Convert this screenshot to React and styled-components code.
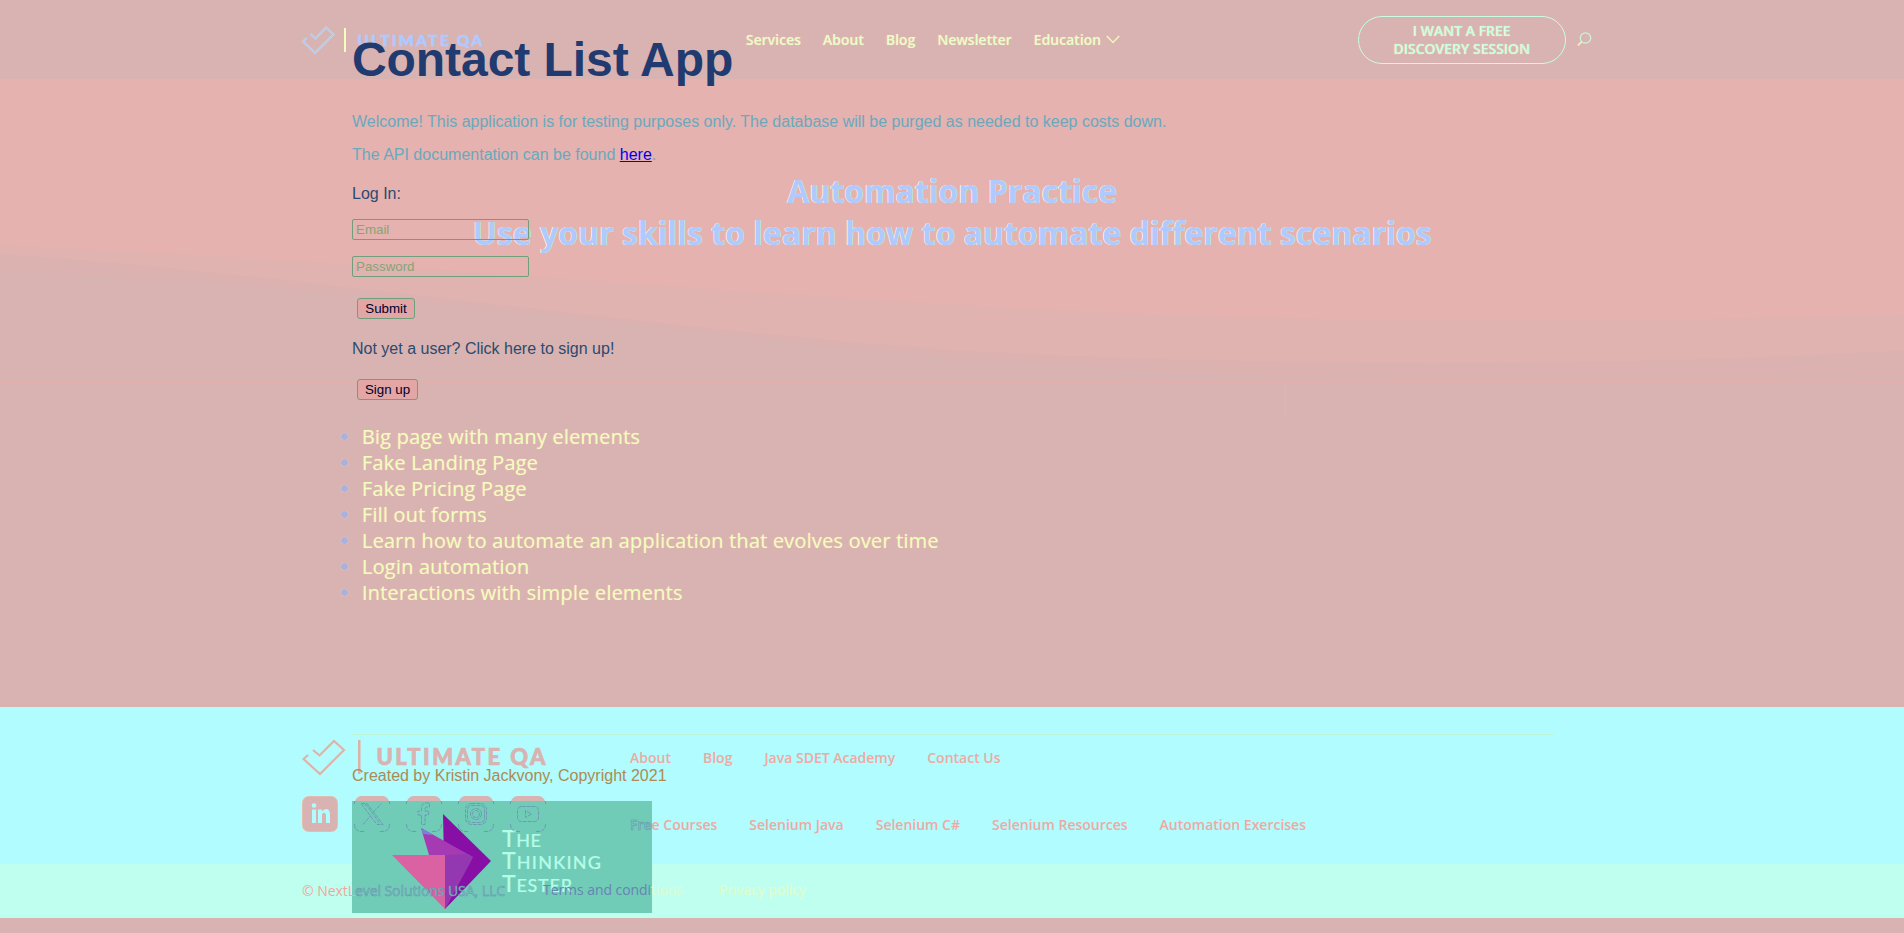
import React from 'react';
import styled, { createGlobalStyle } from 'styled-components';

const sans = '"Open Sans", "Noto Sans", sans-serif';
const arial = '"Liberation Sans", Arial, sans-serif';

const Global = createGlobalStyle`
  * { box-sizing: border-box; }
  html, body { margin: 0; background: #d9b3b1; }
  body { height: 933px; overflow: hidden; font-family: ${sans}; }
  a { text-decoration: none; color: inherit; }
`;

const Stage = styled.div`
  position: relative;
  width: 1904px;
  height: 933px;
  overflow: hidden;
`;
const Page = styled.div`
  display: flex;
  flex-direction: column;
  height: 933px;
`;

/* Header */
const Header = styled.header`
  display: flex;
  align-items: center;
  height: 79px;
  padding-left: 302px;
  background: #d9b3b1;
`;
const Brand = styled.a`
  display: block;
  width: 444px;
  height: 30px;
  svg { display: block; }
`;
const MainNav = styled.nav`
  display: flex;
  gap: 22px;
  width: 612px;
  font-size: 14px;
  font-weight: 600;
  line-height: 20px;
  color: #e6ffc8;
  a { display: flex; align-items: center; gap: 5px; text-shadow: -0.5px 0 1px #ffc4b4; }
`;
const Cta = styled.a`
  display: flex;
  align-items: center;
  justify-content: center;
  width: 208px;
  height: 48px;
  border: 1px solid #c8fde4;
  border-radius: 24px;
  font-size: 14px;
  font-weight: 600;
  line-height: 18px;
  text-align: center;
  color: #c4fde4;
  text-shadow: -0.5px 0 1px #fff0b4;
`;
const Search = styled.svg`
  margin-left: 11px;
`;

/* Hero */
const Hero = styled.section`
  height: 304px;
  background: #e5b2b0;
  position: relative;
`;
const Waves = styled.svg`
  position: absolute;
  inset: 0;
`;
const HeroTitle = styled.h1`
  position: relative;
  margin: 0;
  padding-top: 91px;
  text-align: center;
  font-size: 32px;
  font-weight: 700;
  line-height: 42px;
  color: #b0c9ff;
  text-shadow: -0.6px 0 0 #fbf3b4, 0.5px 0.4px 0 #d4fbe6;
`;

/* Practice list */
const ListSection = styled.section`
  height: 324px;
  padding: 41px 0 0 341px;
`;
const PracticeList = styled.ul`
  list-style: none;
  margin: 0;
  padding: 0;
  font-size: 20px;
  font-weight: 500;
  line-height: 26px;
  letter-spacing: 0.19px;
  color: #eeffbe;
`;
const PracticeItem = styled.li`
  display: flex;
  align-items: center;
  gap: 14px;
  text-shadow: -0.5px 0 1px #ffc4b4;
`;
const Bullet = styled.i`
  width: 7px;
  height: 7px;
  margin-top: -1px;
  border-radius: 50%;
  background: #acb0dc;
  box-shadow: 0 0 1px #c4f4f0;
`;

/* Footer */
const Footer = styled.footer`
  height: 157px;
  padding: 27px 0 0 302px;
  background: #b0fcff;
`;
const Rule = styled.div`
  width: 1202px;
  height: 1px;
  margin-left: 50px;
  background: #bdf3d6;
`;
const FooterRow = styled.div`
  display: flex;
`;
const FooterBrand = styled.div`
  display: flex;
  flex-direction: column;
  width: 328px;
  padding-top: 2px;
`;
const Socials = styled.div`
  position: relative;
  z-index: 2;
  display: flex;
  gap: 16px;
  margin-top: 19px;
  svg { display: block; }
`;
const FooterNavs = styled.div`
  display: flex;
  flex-direction: column;
  gap: 47px;
  padding-top: 13px;
`;
const FooterNav = styled.nav`
  position: relative;
  z-index: 2;
  display: flex;
  gap: 32px;
  font-size: 14px;
  font-weight: 600;
  line-height: 20px;
  color: #efa9a2;
  white-space: nowrap;
`;
const Legal = styled.div`
  display: flex;
  align-items: center;
  height: 54px;
  padding-left: 302px;
  background: #bffff0;
  font-size: 14px;
  line-height: 20px;
  white-space: nowrap;
`;
const Notice = styled.span`
  position: relative;
  z-index: 2;
  width: ${(p) => p.$w}px;
  padding-bottom: ${(p) => p.$lift || 0}px;
  color: ${(p) => p.$tone};
  font-weight: ${(p) => p.$weight || 400};
  letter-spacing: -0.06px;
`;
const Covered = styled.span`
  color: ${(p) => (p.$hollow ? '#70ccb7' : '#6983b2')};
  -webkit-text-stroke: ${(p) => (p.$hollow ? '0.5px #6c8cb3' : '0')};
`;

/* Contact list app, layered over the page */
const ContactApp = styled.main`
  position: absolute;
  top: 0;
  left: 352px;
  width: 1200px;
  font-family: ${arial};
  font-size: 16px;
  line-height: 18px;
`;
const AppTitle = styled.h1`
  margin: 0;
  padding-top: 32px;
  font-size: 48px;
  line-height: 55px;
  font-weight: 700;
  letter-spacing: -0.06px;
  color: #213a70;
`;
const Para = styled.p`
  margin: ${(p) => p.$top}px 0 0;
  color: ${(p) => p.$tone};
`;
const DocLink = styled.a`
  && { color: #0000ee; text-decoration: underline; }
`;
const Field = styled.input`
  display: block;
  width: 177px;
  height: 21px;
  margin: ${(p) => p.$top}px 0 0;
  padding: 1px 3px;
  border: 1px solid #6f9f7d;
  border-radius: 2px;
  background: transparent;
  font: 13.333px ${arial};
  &::placeholder { color: #86a577; }
`;
const AppButton = styled.button`
  display: block;
  width: ${(p) => p.$w}px;
  height: 21px;
  margin: ${(p) => p.$top}px 0 0 5px;
  padding: 0;
  border: 1px solid #6f9f7d;
  border-radius: 3px;
  background: #e2a6a5;
  color: #00002b;
  font: 13.333px ${arial};
`;
const Sponsor = styled.div`
  width: 300px;
  height: 112px;
  margin-top: 16px;
  background: #70ccb7;
  svg { display: block; }
`;
const Caret = styled.div`
  position: absolute;
  top: 384px;
  left: 1285px;
  width: 1px;
  height: 32px;
  background: #ffa6a6;
`;

const Logo = ({ width, height, color, edge, bar, stroke, check, barX, barW, textX, textW, textY, size }) => (
  <svg width={width} height={height} fill="none">
    <path d={check} stroke={edge} strokeWidth={stroke + 0.8} opacity="0.5" />
    <path d={check} stroke={color} strokeWidth={stroke} />
    <rect x={barX} y="3" width={barW} height={height - 6} fill={bar} />
    <text x={textX} y={textY} textLength={textW} fontFamily="Lato, sans-serif" fontWeight="900"
      fontSize={size} fill={color} stroke={color} strokeWidth="0.7">ULTIMATE QA</text>
  </svg>
);

const glyphs = {
  x: <path d="M7 7.500h6L29 28.500h-6zM9 28.500l8-9M19.500 16l8-8.500M10.500 9h2L25.500 27" />,
  facebook: <path d="M15.500 28.500v-9.500h-3.500v-4h3.500v-3q0-5 5-5h3v4h-2.500q-2 0-2 2v2h4l-.6 4h-3.400v9.500z" />,
  instagram: <><rect x="7.500" y="7.500" width="21" height="21" rx="6" /><rect x="9.500" y="9.500" width="17" height="17" rx="4" /><circle cx="18" cy="18" r="5.500" /><circle cx="18" cy="18" r="3.500" /></>,
  youtube: <><rect x="7.500" y="10.500" width="21" height="15" rx="4" /><path d="M15.500 14.500v7l6-3.500z" /></>,
};

const LinkedIn = () => (
  <svg width="36" height="36">
    <rect width="36" height="36" rx="7" fill="#d9b3b1" stroke="#f0dfb8" strokeWidth="0.5" />
    <circle cx="12" cy="9.500" r="2.300" fill="#b0fcff" />
    <path d="M10 13.500h4V27h-4zM16 13.500h4v2q1.500-2.500 4-2.500 4 0 4 5.500V27h-4v-7q0-3.300-2-3.300-2 0-2 3.300v7h-4z" fill="#b0fcff" />
  </svg>
);

const SocialTile = ({ name }) => (
  <svg width="36" height="36" fill="none">
    <path d="M1 5Q3 0 8 0h20q5 0 7 5z" fill="#d9b3b1" />
    <g stroke="#6b8eb4" strokeWidth="0.8" strokeDasharray="4 1">
      <path d="M.5 28q0 7.500 7.500 7.500h3M35.500 28q0 7.500-7.500 7.500h-3M.5 5v3M35.500 5v3" />
      {glyphs[name]}
    </g>
  </svg>
);

const SponsorLine = ({ y, rest, width }) => (
  <text x="150" y={y} textLength={width} fontFamily="Lato, sans-serif" fontWeight="500" fill="#b4fde8"
    stroke="#b4fde8" strokeWidth="0.2">
    <tspan fontSize="23">T</tspan><tspan fontSize="18">{rest}</tspan>
  </text>
);

const practices = [
  'Big page with many elements', 'Fake Landing Page', 'Fake Pricing Page', 'Fill out forms',
  'Learn how to automate an application that evolves over time', 'Login automation',
  'Interactions with simple elements',
];

export default function App() {
  return (
    <Stage>
      <Global />
      <Page>
        <Header>
          <Brand href="#">
            <Logo width={190} height={30} color="#b0c9ff" edge="#e4fbd0" bar="#f4ffbc" stroke={1.4}
              check="M4.500 13L1 16.500L13 28L31.500 9.500L24 2.500L13.500 13.500L8.500 9"
              barX={42} barW={2} textX={55.5} textW={125} textY={20.8} size={15.5} />
          </Brand>
          <MainNav>
            <a href="#">Services</a><a href="#">About</a><a href="#">Blog</a><a href="#">Newsletter</a>
            <a href="#">Education
              <svg width="14" height="9" fill="none"><path d="M.8 1l6.200 6.500L13.200 1" stroke="#f0f6b8" strokeWidth="1.500" /></svg>
            </a>
          </MainNav>
          <Cta href="#">I WANT A FREE<br />DISCOVERY SESSION</Cta>
          <Search width="15" height="15" fill="none">
            <circle cx="8.500" cy="6" r="5.200" stroke="#c6f8e0" strokeWidth="1.200" />
            <path d="M4.700 9.700L.8 13.500" stroke="#f0e8b8" strokeWidth="2" />
          </Search>
        </Header>
        <Hero>
          <Waves width="1904" height="304" viewBox="0 79 1904 304">
            <path d="M0 245C480 266 900 310 1255 317C1480 323 1700 321 1904 314V383H0z" fill="#e0b2b0" />
            <path d="M0 254C300 274 600 324 952 350C1250 368 1650 367 1904 350V383H0z" fill="#dcb2b0" />
            <path d="M0 271C330 282 620 327 952 357C1200 378 1450 384 1600 382Q1780 382 1904 377V383H0z" fill="#d9b3b1" />
            <path d="M0 382.500H1904" stroke="#e4b0ae" />
          </Waves>
          <HeroTitle>Automation Practice<br />Use your skills to learn how to automate different scenarios</HeroTitle>
        </Hero>
        <ListSection>
          <PracticeList>
            {practices.map((p) => <PracticeItem key={p}><Bullet /><a href="#">{p}</a></PracticeItem>)}
          </PracticeList>
        </ListSection>
        <Footer>
          <Rule />
          <FooterRow>
            <FooterBrand>
              <Logo width={250} height={40} color="#d9b3b1" edge="#f8e4b0" bar="#e0b0a6" stroke={2}
                check="M6 18L1.500 22L18 37L42 13L32 4L17.500 18.500L11 13"
                barX={56} barW={2.5} textX={74.5} textW={169} textY={28} size={22} />
              <Socials>
                <LinkedIn />
                {Object.keys(glyphs).map((g) => <SocialTile key={g} name={g} />)}
              </Socials>
            </FooterBrand>
            <FooterNavs>
              <FooterNav>
                <a href="#">About</a><a href="#">Blog</a><a href="#">Java SDET Academy</a><a href="#">Contact Us</a>
              </FooterNav>
              <FooterNav>
                <a href="#"><Covered $hollow>Fre</Covered>e Courses</a><a href="#">Selenium Java</a><a href="#">Selenium C#</a>
                <a href="#">Selenium Resources</a><a href="#">Automation Exercises</a>
              </FooterNav>
            </FooterNavs>
          </FooterRow>
        </Footer>
        <Legal>
          <Notice $w={241} $tone="#efa79c" $weight={500}>© NextL<Covered $hollow>evel Solutions USA, LLC</Covered></Notice>
          <Notice $w={176} $lift={2} $tone="#dffbcf"><Covered>Terms and condi</Covered>tions</Notice>
          <Notice $w={100} $lift={2} $tone="#e4fdc8">Privacy policy</Notice>
        </Legal>
      </Page>
      <Caret />
      <ContactApp>
        <AppTitle>Contact List App</AppTitle>
        <Para $top={26} $tone="#69a9bd">Welcome! This application is for testing purposes only. The database will be purged as needed to keep costs down.</Para>
        <Para $top={15} $tone="#69a9bd">The API documentation can be found <DocLink href="#">here</DocLink>.</Para>
        <Para $top={21} $tone="#2b4a70">Log In:</Para>
        <Field $top={16} placeholder="Email" />
        <Field $top={16} placeholder="Password" />
        <AppButton $top={21} $w={58}>Submit</AppButton>
        <Para $top={21} $tone="#2b4a70">Not yet a user? Click here to sign up!</Para>
        <AppButton $top={21} $w={61}>Sign up</AppButton>
        <Para $top={367} $tone="#ad8a55">Created by Kristin Jackvony, Copyright 2021</Para>
        <Sponsor>
          <svg width="300" height="112">
            <path d="M91 13L139 60L93 108z" fill="#880fa5" />
            <path d="M69 27L121 56L93 108L77 54z" fill="#a63ab3" />
            <path d="M93 54V108L121 56L116 53z" fill="#9438b1" />
            <path d="M69 27L81 34L71 33z" fill="#7b80df" />
            <path d="M40 54H93V108z" fill="#db62a2" />
            <SponsorLine y="46" rest="HE" width="39" />
            <SponsorLine y="68" rest="HINKING" width="99" />
            <SponsorLine y="91" rest="ESTER" width="70" />
          </svg>
        </Sponsor>
      </ContactApp>
    </Stage>
  );
}
